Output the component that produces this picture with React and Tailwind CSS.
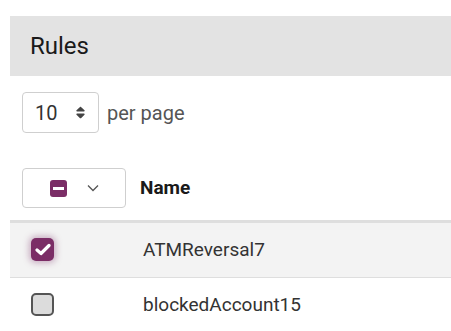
import { FaSort } from 'react-icons/fa';

const rules = [
    { name: 'ATMReversal7', selected: true },
    { name: 'blockedAccount15', selected: false },
];

function Checkbox({ checked }) {
    if (checked) {
        return (
            <span className="flex h-[23px] w-[23px] items-center justify-center rounded-[5px] bg-[#7b2d66] shadow-[0_0_6px_2px_rgba(123,45,102,0.35)]">
                <svg className="h-[13px] w-[16px]" viewBox="0 0 16 13" fill="none">
                    <path d="M2 7 6 10.5 14 2.5" stroke="white" strokeWidth="3.2" strokeLinecap="round" strokeLinejoin="round" />
                </svg>
            </span>
        );
    }
    return (
        <span className="block h-[23px] w-[23px] rounded-[5px] border-2 border-[#555] bg-[#dcdcdc]" />
    );
}

export default function App() {
    return (
        <div
            className="min-h-[331px] bg-white pl-[10px] pt-4 text-[#222]"
            style={{ fontFamily: 'Roboto, "Liberation Sans", sans-serif' }}
        >
            <div className="flex h-[60px] items-center bg-[#e3e3e3] px-5">
                <h1 className="text-[24px] font-normal text-[#1a1a1a]">Rules</h1>
            </div>

            <div className="mt-4 flex items-center pl-3">
                <div className="flex h-[41px] w-[77px] shrink-0 items-center justify-between rounded-[4px] border border-[#cfcfcf] pl-3 pr-3">
                    <span className="text-[20px] text-[#333]">10</span>
                    <FaSort className="h-[15px] w-[11px] text-[#444]" />
                </div>
                <span className="ml-2 text-[20px] text-[#555]">per page</span>
            </div>

            <div className="mt-[35px]">
                <div className="flex items-center border-b-[3px] border-[#dedede] pb-3">
                    <div className="w-[130px] shrink-0 pl-3">
                        <div className="flex h-[40px] w-[104px] items-center rounded-[4px] border border-[#cfcfcf] pl-[27px]">
                            <span className="flex h-[17px] w-[17px] items-center justify-center rounded-[3px] bg-[#7b2d66]">
                                <span className="h-[3px] w-[11px] bg-white" />
                            </span>
                            <svg className="ml-[20px] h-[8px] w-[12px]" viewBox="0 0 12 8" fill="none">
                                <path d="M1 1.5 6 6.5 11 1.5" stroke="#555" strokeWidth="1.3" />
                            </svg>
                        </div>
                    </div>
                    <span className="text-[19px] font-bold text-[#1a1a1a]">Name</span>
                </div>

                {rules.map((rule) => (
                    <div
                        key={rule.name}
                        className={`flex h-[55px] items-center border-b border-[#dedede] ${rule.selected ? 'bg-[#f3f3f3]' : 'bg-white'}`}
                    >
                        <div className="w-[133px] shrink-0 pl-[21px] pb-[2px]">
                            <Checkbox checked={rule.selected} />
                        </div>
                        <span className="text-[19px] text-[#333]">{rule.name}</span>
                    </div>
                ))}
            </div>
        </div>
    );
}
